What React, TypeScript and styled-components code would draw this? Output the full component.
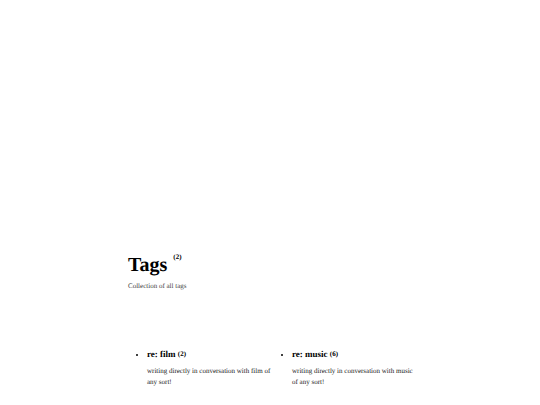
import React from "react";
import styled, { createGlobalStyle } from "styled-components";

const GlobalStyle = createGlobalStyle`
  body {
    margin: 0;
    background: #fff;
    color: #000;
    font-family: "Liberation Serif", "Times New Roman", serif;
    text-rendering: geometricPrecision;
  }
`;

const Page = styled.main`
  box-sizing: border-box;
  max-width: 296px;
  margin: 0 auto;
  padding: 252px 0 0 6px;
`;

const Title = styled.h1`
  margin: 0;
  display: flex;
  align-items: flex-start;
  gap: 6px;
  font-size: 20px;
  line-height: 27px;
`;

const TitleCount = styled.span`
  font-size: 7px;
  line-height: 10px;
`;

const Lead = styled.p`
  margin: 1px 0 0;
  font-size: 7px;
  line-height: 12px;
  color: #444;
`;

const TagList = styled.ul`
  display: grid;
  grid-template-columns: 1fr 1fr;
  margin: 56px 0 0;
  padding: 0;
`;

const TagItem = styled.li`
  margin-left: 19px;
  font-size: 7px;
  line-height: 12px;
`;

const TagName = styled.h2`
  margin: 0;
  font-size: 9px;
  line-height: 12px;
`;

const TagLink = styled.a`
  color: inherit;
  text-decoration: none;
`;

const TagCount = styled.span`
  font-size: 7px;
  line-height: 8px;
  vertical-align: 1px;
`;

const Description = styled.p`
  margin: 6px 0 0;
  line-height: 11px;
  color: #222;
`;

const tags = [
  { name: "re: film", slug: "film", count: 2, description: "writing directly in conversation with film of any sort!" },
  { name: "re: music", slug: "music", count: 6, description: "writing directly in conversation with music of any sort!" },
];

export default function App() {
  return (
    <>
      <GlobalStyle />
      <Page>
        <Title>
          Tags <TitleCount>({tags.length})</TitleCount>
        </Title>
        <Lead>Collection of all tags</Lead>
        <TagList>
          {tags.map((tag) => (
            <TagItem key={tag.slug}>
              <TagName>
                <TagLink href={`#${tag.slug}`}>{tag.name}</TagLink> <TagCount>({tag.count})</TagCount>
              </TagName>
              <Description>{tag.description}</Description>
            </TagItem>
          ))}
        </TagList>
      </Page>
    </>
  );
}
